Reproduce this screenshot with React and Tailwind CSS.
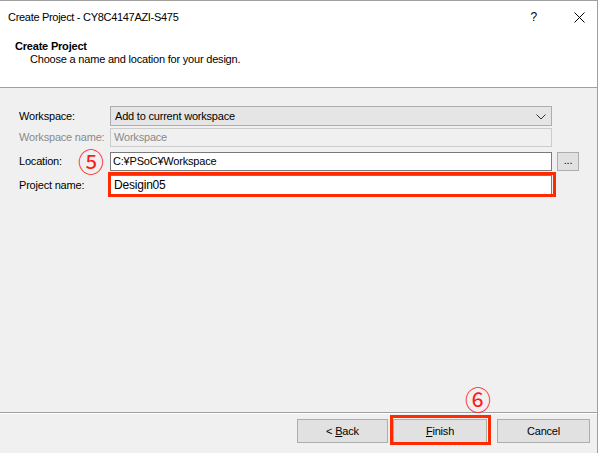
import React from "react";

const font = { fontFamily: '"Liberation Sans", "Noto Sans CJK JP", sans-serif' };

const Btn = ({ children, className = "" }) => (
  <div
    className={`h-[24px] flex items-center justify-center bg-[#e1e1e1] border border-[#adadad] text-[11px] text-black ${className}`}
  >
    {children}
  </div>
);

const Row = ({ label, muted, children, className = "" }) => (
  <div className={`flex items-center ${className}`}>
    <div
      className={`w-[91px] whitespace-nowrap text-[11px] tracking-[-0.2px] ${muted ? "text-[#8a8a8a]" : "text-black"}`}
    >
      {label}
    </div>
    {children}
  </div>
);

export default function App() {
  return (
    <div className="w-[600px] h-[453px] bg-white flex overflow-hidden tracking-[-0.2px]" style={font}>
      <div className="w-[598px] h-full border-t border-r border-[#a0a0a0] flex flex-col">
        {/* title bar */}
        <div className="h-[32px] flex items-center pl-[8px] bg-white text-[11px] text-black">
          <span className="tracking-[-0.3px]">Create Project - CY8C4147AZI-S475</span>
          <span className="ml-auto mr-[37px] text-[12px]">?</span>
          <svg width="11" height="11" viewBox="0 0 11 11" className="mr-[12px]">
            <path d="M0.5 0.5 L10.5 10.5 M10.5 0.5 L0.5 10.5" stroke="#000" strokeWidth="1" />
          </svg>
        </div>

        {/* header */}
        <div className="h-[55px] bg-white border-b border-[#a0a0a0] pl-[15px] pt-[7px]">
          <div className="text-[11px] font-bold leading-[13px] text-black">Create Project</div>
          <div className="pl-[15px] text-[11px] leading-[13px] text-black">
            Choose a name and location for your design.
          </div>
        </div>

        {/* body */}
        <div className="flex-1 bg-[#f0f0f0] relative pl-[19px] pt-[18px]">
          <Row label="Workspace:">
            <div className="w-[442px] h-[20px] bg-[#e5e5e5] border border-[#adadad] flex items-center pl-[4px] pr-[5px] text-[11px]">
              <span>Add to current workspace</span>
              <svg width="10" height="6" viewBox="0 0 10 6" className="ml-auto mt-[2px]">
                <path d="M0.5 0.5 L5 5 L9.5 0.5" fill="none" stroke="#333" strokeWidth="1" />
              </svg>
            </div>
          </Row>
          <Row label="Workspace name:" muted className="mt-[2px]">
            <div className="w-[442px] h-[19px] bg-[#f0f0f0] border border-[#cccccc] flex items-center pl-[3px] text-[11px] text-[#8a8a8a]">
              Workspace
            </div>
          </Row>
          <Row label="Location:" className="mt-[5px]">
            <div className="w-[442px] h-[19px] bg-white border border-[#7a7a7a] flex items-center pl-[2px] text-[11px]">
              C:¥PSoC¥Workspace
            </div>
            <div className="ml-[5px] w-[22px] h-[19px] bg-[#e1e1e1] border border-[#adadad] flex items-center justify-center text-[11px] leading-none pb-[3px]">
              ...
            </div>
          </Row>
          <Row label="Project name:" className="mt-[4px]">
            <div className="w-[442px] h-[20px] bg-white border border-[#7a7a7a] border-b-[#0078d7] flex items-center pl-[3px] text-[12px]">
              Desigin05
            </div>
          </Row>

          {/* annotations */}
          <div className="absolute left-[108px] top-[84px] w-[448px] h-[25px] border-[3px] border-[#ff2a00]" />
          <div
            className="absolute left-[78px] top-[60px] text-[26px] leading-none text-[#ff1a1a]"
            style={{ fontFamily: '"Noto Sans CJK JP", sans-serif' }}
          >
            ⑤
          </div>
          <div
            className="absolute left-[465px] top-[298px] text-[26px] leading-none text-[#ff1a1a]"
            style={{ fontFamily: '"Noto Sans CJK JP", sans-serif' }}
          >
            ⑥
          </div>
        </div>

        {/* footer */}
        <div className="h-[41px] bg-[#f0f0f0] border-t border-[#a0a0a0]">
          <div className="h-full border-t border-white relative flex pl-[297px] pt-[5px]">
            <Btn className="w-[91px]">
              &lt;&nbsp;<span className="underline">B</span>ack
            </Btn>
            <Btn className="ml-[5px] w-[94px] border-[#0078d7]">
              <span className="underline">F</span>inish
            </Btn>
            <Btn className="ml-[10px] w-[93px]">Cancel</Btn>
            <div className="absolute left-[390px] top-[1px] w-[101px] h-[30px] border-[3px] border-[#ff2a00]" />
          </div>
        </div>
      </div>
    </div>
  );
}
